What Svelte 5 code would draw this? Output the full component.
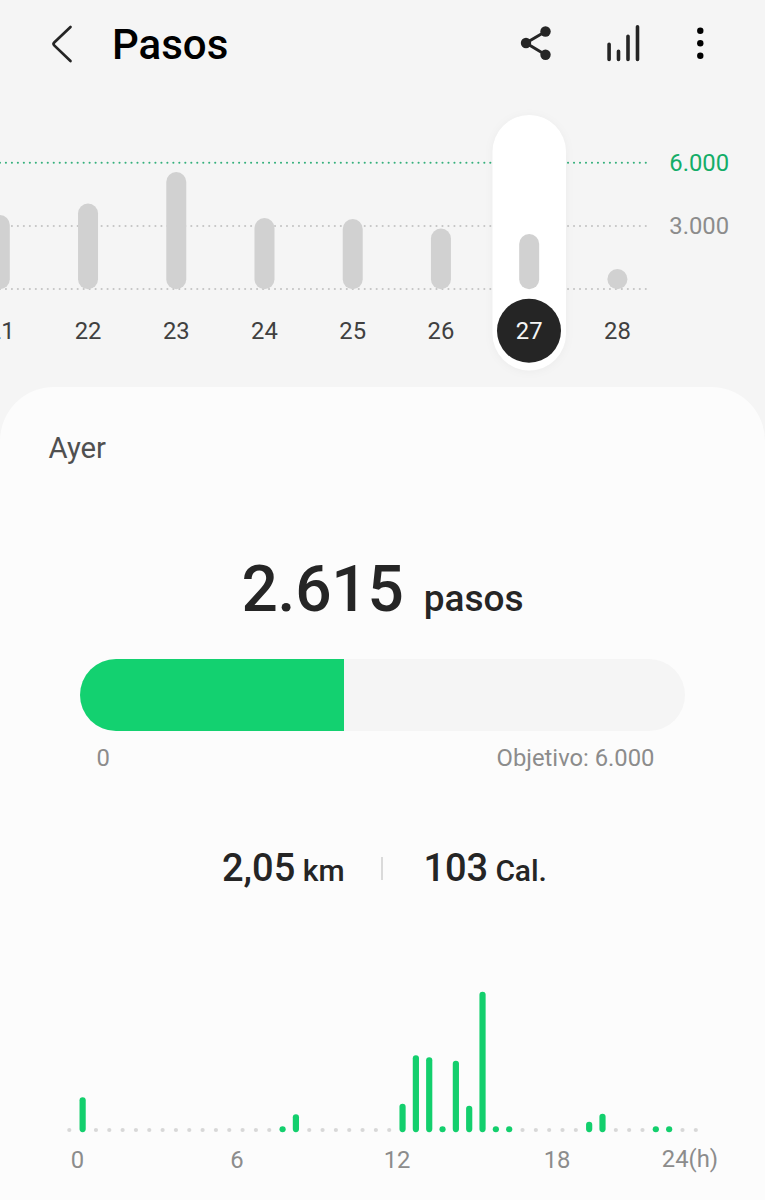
<script>
  const goal = 6000;
  const steps = 2615;

  const days = [
    { day: 21, top: 215 },
    { day: 22, top: 203.5 },
    { day: 23, top: 172 },
    { day: 24, top: 218 },
    { day: 25, top: 219 },
    { day: 26, top: 228.5 },
    { day: 27, top: 234 },
    { day: 28, top: 269 }
  ].map((d, i) => ({ ...d, x: -0.2 + i * 88.23 }));

  const gridLines = [
    { y: 162.8, color: '#35b07c' },
    { y: 226, color: '#c4c4c4' },
    { y: 289, color: '#c4c4c4' }
  ];

  // Height of each half-hour bar, keyed by slot index
  const activity = {
    1: 35, 16: 6, 17: 18, 25: 28.5, 26: 77, 27: 75, 28: 6, 29: 71.5,
    30: 26.5, 31: 140.5, 32: 6, 33: 6, 39: 10.5, 40: 18.5, 44: 6, 45: 6
  };
  const slots = Array.from({ length: 48 }, (_, i) => ({
    x: 69.3 + i * 13.33,
    h: activity[i] ?? 0
  }));
  const hours = [
    { label: '0', x: 77.5 },
    { label: '6', x: 237 },
    { label: '12', x: 397 },
    { label: '18', x: 557 }
  ];
</script>

<main>
  <header>
    <svg class="back" width="30" height="44" viewBox="0 0 30 44" aria-hidden="true">
      <path d="M22.5 5 6.2 20.6Q4.8 22 6.2 23.4L22.5 39" />
    </svg>
    <h1>Pasos</h1>
    <nav>
      <svg width="36" height="40" viewBox="518 23 36 40" aria-hidden="true">
        <path d="M545.5 31.5 526 43 545.5 54.7" fill="none" stroke="#252525" stroke-width="3" />
        <circle cx="545.5" cy="31.5" r="5.2" /><circle cx="526" cy="43" r="5.2" /><circle cx="545.5" cy="54.7" r="5.2" />
      </svg>
      <svg class="levels" width="40" height="40" viewBox="604 23 40 40" aria-hidden="true">
        <path d="M609.1 44.3V59.5M618.5 51.3V59.5M628 36.3V59.5M637.5 26.8V59.5" />
      </svg>
      <svg class="more" width="12" height="40" viewBox="694 23 12 40" aria-hidden="true">
        <circle cx="700.3" cy="30.7" r="3.2" /><circle cx="700.3" cy="43.2" r="3.2" /><circle cx="700.3" cy="55.7" r="3.2" />
      </svg>
    </nav>
  </header>

  <svg class="week" width="765" height="297" viewBox="0 90 765 297">
    {#each gridLines as line}
      <line x1="645.8" x2="-4" y1={line.y} y2={line.y} stroke={line.color} stroke-width="2.1" stroke-linecap="round" stroke-dasharray="0.01 5.97" />
    {/each}
    <rect class="pill" x="492.5" y="115" width="73.5" height="255.5" rx="36.75" />
    {#each days as d}
      <rect x={d.x - 10} y={d.top} width="20" height={289.3 - d.top} rx="10" fill="#d1d1d1" />
      {#if d.day === 27}<circle cx="529" cy="330.8" r="32" fill="#252525" />{/if}
      <text class:selected={d.day === 27} x={d.day === 21 ? 1.2 : d.x} y="339.3" text-anchor="middle">{d.day}</text>
    {/each}
    <text class="goal" x="669.3" y="171">6.000</text>
    <text class="mid" x="669.3" y="234.3">3.000</text>
  </svg>

  <section>
    <h2>Ayer</h2>
    <p class="total"><strong>2.615</strong><span>pasos</span></p>
    <div class="track"><div class="fill" style="width: {(steps / goal) * 100}%"></div></div>
    <div class="range"><span>0</span><span>Objetivo: 6.000</span></div>
    <div class="stats">
      <p class="km"><b>2,05</b> km</p>
      <i></i>
      <p class="cal"><b>103</b> Cal.</p>
    </div>
    <svg class="hours" width="765" height="309" viewBox="0 891 765 309">
      {#each slots as s}
        {#if s.h}
          <rect x={s.x - 3.1} y={1132.2 - s.h} width="6.2" height={s.h} rx="3.1" fill="#13cf6d" />
        {:else}
          <circle cx={s.x} cy="1130" r="2.1" fill="#d8d8d8" />
        {/if}
      {/each}
      {#each hours as h}
        <text x={h.x} y="1168" text-anchor="middle">{h.label}</text>
      {/each}
      <text x="690" y="1167" text-anchor="middle">24(h)</text>
    </svg>
  </section>
</main>

<style>
  :global(body) {
    background: #f5f5f5;
  }
  main {
    width: 765px;
    height: 1200px;
    overflow: hidden;
    background: #f5f5f5;
    font-family: Roboto, sans-serif;
    color: #252525;
  }
  h1, h2, p {
    margin: 0;
  }
  svg {
    display: block;
    flex: none;
  }
  header {
    box-sizing: border-box;
    height: 90px;
    padding: 0 59px 0 48px;
    display: flex;
    align-items: center;
  }
  .back {
    margin-bottom: 3px;
    fill: none;
    stroke: #252525;
    stroke-width: 2.7;
    stroke-linecap: round;
  }
  h1 {
    margin-left: 34px;
    font-size: 42px;
    line-height: 50px;
    font-weight: 500;
    color: #000;
  }
  nav {
    display: flex;
    gap: 50px;
    margin-left: auto;
    margin-bottom: 4px;
    fill: #252525;
  }
  .levels {
    fill: none;
    stroke: #252525;
    stroke-width: 3.6;
    stroke-linecap: round;
  }
  .more {
    fill: #000;
  }
  text {
    font-size: 23.8px;
    fill: #404040;
  }
  .pill {
    fill: #fff;
    filter: drop-shadow(0 1px 4px rgb(0 0 0 / 4%));
  }
  .selected {
    fill: #f5f5f5;
  }
  .goal {
    fill: #13ad68;
  }
  .mid, .hours text {
    fill: #8c8c8c;
  }
  section {
    height: 813px;
    box-sizing: border-box;
    padding-top: 43px;
    border-radius: 54px 54px 0 0;
    background: #fcfcfc;
  }
  h2 {
    padding-left: 48.5px;
    font-size: 29.3px;
    line-height: 36px;
    font-weight: 400;
    color: #505050;
  }
  .total {
    display: flex;
    justify-content: center;
    align-items: baseline;
    gap: 20px;
    margin-top: 86px;
    height: 76px;
    line-height: 76px;
    font-weight: 500;
  }
  .total strong {
    font-size: 64px;
    font-weight: 500;
    letter-spacing: -0.2px;
  }
  .total span {
    font-size: 37px;
  }
  .track {
    width: 605px;
    height: 72px;
    margin: 31px 80px 0;
    border-radius: 36px;
    overflow: hidden;
    background: #f5f5f5;
  }
  .fill {
    height: 100%;
    background: #13d170;
  }
  .range {
    display: flex;
    justify-content: space-between;
    margin-top: 13px;
    padding: 0 110.5px 0 96.5px;
    font-size: 23.8px;
    line-height: 28px;
    color: #8c8c8c;
  }
  .stats {
    display: flex;
    align-items: center;
    height: 44px;
    margin-top: 75px;
    padding-left: 222px;
    font-size: 30px;
    line-height: 44px;
    font-weight: 500;
  }
  .stats b {
    font-size: 38px;
    font-weight: 500;
  }
  .stats i {
    width: 2px;
    height: 23px;
    margin: 0 41px 2px 36px;
    background: #dadada;
  }
  .cal {
    letter-spacing: -0.1px;
  }
</style>
